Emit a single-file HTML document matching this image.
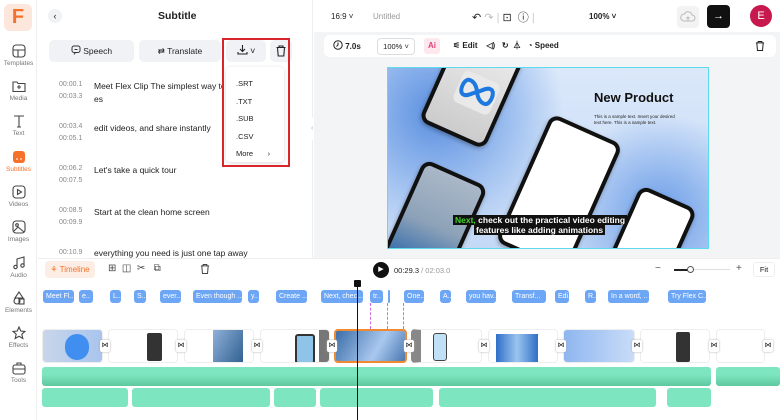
<!DOCTYPE html>
<html><head><meta charset="utf-8"><style>
*{box-sizing:border-box;margin:0;padding:0}
body{width:780px;height:420px;overflow:hidden;background:#fff;font-family:"Liberation Sans",sans-serif;color:#222;position:relative}
.a{position:absolute}
.side{left:0;top:0;width:37px;height:420px;border-right:1px solid #eee;background:#fff}
.si{position:absolute;left:0;width:37px;text-align:center;font-size:6.5px;color:#777}
.si svg{display:block;margin:0 auto 2px}
.sub{font-size:8.5px;color:#222}
.tm{font-size:7px;color:#888;line-height:12px}
.chip{position:absolute;top:290px;height:13px;background:#6ea6f6;border-radius:3px;color:#fff;font-size:7px;line-height:13px;padding-left:3px;overflow:hidden;white-space:nowrap}
.clip{position:absolute;top:329px;height:34px;border-radius:4px;background:#fff;border:1px solid #eee;overflow:hidden}
.tr{position:absolute;top:340px;width:10px;height:12px;background:#fff;border-radius:2px;font-size:7px;text-align:center;line-height:12px;color:#222;box-shadow:0 0 2px #aaa}
.au{position:absolute;height:19px;background:#7de6c0;border-radius:3px}
.ph{position:absolute;border:4px solid #111;border-radius:10px;background:#fff;box-shadow:0 2px 4px rgba(0,0,0,.3)}
</style></head><body>
<div class="a side">
 <div class="a" style="left:4px;top:4px;width:28px;height:27px;background:#fde7dc;border-radius:6px;color:#f5702a;font-weight:bold;font-size:20px;text-align:center;line-height:27px">F</div>
 <div class="si" style="top:44px"><svg width="14" height="14" viewBox="0 0 14 14" fill="none" stroke="#444" stroke-width="1.1"><rect x="1" y="1" width="12" height="12" rx="3"/><path d="M1 6h12M6 6v7"/></svg>Templates</div>
 <div class="si" style="top:79px"><svg width="14" height="14" viewBox="0 0 14 14" fill="none" stroke="#444" stroke-width="1.1"><path d="M1 3h4l1 1.5h7v8H1z"/><path d="M7 6v4M5 8h4"/></svg>Media</div>
 <div class="si" style="top:114px"><svg width="14" height="14" viewBox="0 0 14 14" fill="none" stroke="#444" stroke-width="1.1"><path d="M2 2h10M7 2v11M5 13h4"/></svg>Text</div>
 <div class="si" style="top:150px;color:#f5702a"><svg width="14" height="14" viewBox="0 0 14 14"><rect x="1" y="1" width="12" height="12" rx="3" fill="#f5702a"/><path d="M4 9h2M8 9h2" stroke="#fff"/></svg>Subtitles</div>
 <div class="si" style="top:185px"><svg width="14" height="14" viewBox="0 0 14 14" fill="none" stroke="#444" stroke-width="1.1"><rect x="1" y="1" width="12" height="12" rx="3"/><path d="M5.5 4.5v5l4-2.5z"/></svg>Videos</div>
 <div class="si" style="top:220px"><svg width="14" height="14" viewBox="0 0 14 14" fill="none" stroke="#444" stroke-width="1.1"><rect x="1" y="1" width="12" height="12" rx="3"/><circle cx="5" cy="5" r="1.3"/><path d="M2 11l4-4 6 5"/></svg>Images</div>
 <div class="si" style="top:256px"><svg width="14" height="14" viewBox="0 0 14 14" fill="none" stroke="#444" stroke-width="1.1"><path d="M5 11V3l7-2v8"/><circle cx="3.5" cy="11" r="1.7"/><circle cx="10.5" cy="9.5" r="1.7"/></svg>Audio</div>
 <div class="si" style="top:291px"><svg width="14" height="14" viewBox="0 0 14 14" fill="none" stroke="#444" stroke-width="1.1"><path d="M7 1l4 6H3z"/><circle cx="5" cy="10" r="3"/><rect x="7" y="8" width="5" height="5"/></svg>Elements</div>
 <div class="si" style="top:326px"><svg width="14" height="14" viewBox="0 0 14 14" fill="none" stroke="#444" stroke-width="1.1"><path d="M7 1l1.8 4 4.2.4-3.2 2.8 1 4.3L7 10.3 3.2 12.5l1-4.3L1 5.4l4.2-.4z"/></svg>Effects</div>
 <div class="si" style="top:361px"><svg width="14" height="14" viewBox="0 0 14 14" fill="none" stroke="#444" stroke-width="1.1"><rect x="1" y="4" width="12" height="9" rx="2"/><path d="M5 4V2h4v2M1 8h12"/></svg>Tools</div>
</div>

<!-- subtitle panel -->
<div class="a" style="left:38px;top:0;width:275px;height:258px;background:#fff;border-right:1px solid #eee"></div>
<div class="a" style="left:48px;top:9px;width:14px;height:14px;border-radius:7px;background:#f1f2f4;font-size:9px;text-align:center;line-height:14px">‹</div>
<div class="a" style="left:158px;top:10px;font-size:10.5px;font-weight:bold">Subtitle</div>
<div class="a" style="left:49px;top:40px;width:85px;height:22px;background:#f1f2f5;border-radius:5px;font-size:8.5px;line-height:22px;text-align:center"><svg width="10" height="10" viewBox="0 0 10 10" fill="none" stroke="#333" style="vertical-align:-1px"><rect x="1" y="1" width="8" height="6.5" rx="2"/><path d="M3 9.5l1.5-2M3.5 4.5h3"/></svg> Speech</div>
<div class="a" style="left:139px;top:40px;width:82px;height:22px;background:#f1f2f5;border-radius:5px;font-size:8.5px;line-height:22px;text-align:center">⇄ Translate</div>
<div class="a" style="left:226px;top:40px;width:40px;height:22px;background:#f1f2f5;border-radius:5px;font-size:9px;line-height:22px;text-align:center"><svg width="11" height="11" viewBox="0 0 11 11" fill="none" stroke="#222" stroke-width="1.1" style="vertical-align:-1px"><path d="M5.5 1v6M3 5l2.5 2.5L8 5M1 8v2h9V8"/></svg> ˅</div>
<div class="a" style="left:270px;top:40px;width:22px;height:22px;background:#f1f2f5;border-radius:5px"><svg width="22" height="22" viewBox="0 0 22 22" fill="none" stroke="#222" stroke-width="1.1"><path d="M6.5 7.5h9M9 7.5V6h4v1.5M7.5 7.5l.7 8.5h5.6l.7-8.5"/></svg></div>
<div class="a" style="left:226px;top:67px;width:58px;height:95px;background:#fff;border-radius:4px;box-shadow:0 1px 4px rgba(0,0,0,.15)"></div>
<div class="a sub" style="left:236px;top:75px;font-size:7.5px;line-height:17.5px">.SRT<br>.TXT<br>.SUB<br>.CSV<br>More &nbsp; &nbsp; &nbsp; ›</div>
<div class="a" style="left:222px;top:38px;width:68px;height:129px;border:2px solid #d8262a"></div>
<div class="a tm" style="left:59px;top:79px">00:00.1<br>00:03.3</div>
<div class="a sub" style="left:94px;top:80px;line-height:13px;white-space:nowrap;width:128px;overflow:hidden">Meet Flex Clip The simplest way tog<br>es</div>
<div class="a tm" style="left:59px;top:121px">00:03.4<br>00:05.1</div>
<div class="a sub" style="left:94px;top:123px">edit videos, and share instantly</div>
<div class="a tm" style="left:59px;top:163px">00:06.2<br>00:07.5</div>
<div class="a sub" style="left:94px;top:165px">Let's take a quick tour</div>
<div class="a tm" style="left:59px;top:205px">00:08.5<br>00:09.9</div>
<div class="a sub" style="left:94px;top:207px">Start at the clean home screen</div>
<div class="a tm" style="left:59px;top:247px">00:10.9</div>
<div class="a sub" style="left:94px;top:248px">everything you need is just one tap away</div>
<div class="a" style="left:311px;top:117px;width:8px;height:24px;background:#fff;border-radius:4px;font-size:7px;color:#aaa;line-height:24px">‹</div>

<!-- right area -->
<div class="a" style="left:314px;top:0;width:466px;height:258px;background:#f3f4f6"></div>
<div class="a" style="left:314px;top:0;width:466px;height:32px;background:#fff"></div>
<div class="a" style="left:331px;top:12px;font-size:8px">16:9 ˅</div>
<div class="a" style="left:373px;top:12px;font-size:8px;color:#999">Untitled</div>
<div class="a" style="left:472px;top:9px;font-size:11px">↶ <span style="color:#bbb">↷</span> <span style="color:#ccc">|</span> ⊡ &nbsp;ⓘ <span style="color:#ccc">|</span></div>
<div class="a" style="left:589px;top:12px;font-size:8px;font-weight:bold">100% ˅</div>
<div class="a" style="left:677px;top:6px;width:22px;height:22px;background:#f3f3f3;border-radius:4px"><svg width="22" height="22" viewBox="0 0 22 22" fill="none" stroke="#bbb"><path d="M7 15h8a3 3 0 000-6 4 4 0 00-7.5-1A3.5 3.5 0 007 15zM11 11v4M9.5 12.5L11 11l1.5 1.5"/></svg></div>
<div class="a" style="left:707px;top:5px;width:23px;height:23px;background:#111;border-radius:4px;color:#fff;font-size:11px;text-align:center;line-height:23px">→</div>
<div class="a" style="left:750px;top:5px;width:22px;height:22px;background:#c8194f;border-radius:11px;color:#fff;font-size:11px;text-align:center;line-height:22px">E</div>
<div class="a" style="left:324px;top:35px;width:452px;height:22px;background:#fff;border-radius:6px"></div>
<div class="a" style="left:333px;top:40px;font-size:8px;font-weight:bold;white-space:nowrap"><svg width="10" height="10" viewBox="0 0 10 10" fill="none" stroke="#222" style="vertical-align:-1px"><circle cx="5" cy="5" r="4.2"/><path d="M5 2.5V5L3.5 6.5"/></svg> 7.0s</div>
<div class="a" style="left:377px;top:38px;width:38px;height:17px;border:1px solid #ddd;border-radius:4px;font-size:7.5px;text-align:center;line-height:15px">100% ˅</div>
<div class="a" style="left:424px;top:38px;width:16px;height:16px;background:#fde8ee;border-radius:3px;color:#e0407a;font-size:8px;font-weight:bold;text-align:center;line-height:16px">Ai</div>
<div class="a" style="left:453px;top:40px;font-size:8px;font-weight:bold;white-space:nowrap">⚟ Edit &nbsp; &nbsp;◁) &nbsp; ↻ &nbsp;⏃ &nbsp; ◔ Speed</div>
<div class="a" style="left:750px;top:36px"><svg width="20" height="20" viewBox="0 0 22 22" fill="none" stroke="#222" stroke-width="1.1"><path d="M6.5 7.5h9M9 7.5V6h4v1.5M7.5 7.5l.7 8.5h5.6l.7-8.5"/></svg></div>
<div class="a" style="left:387px;top:67px;width:322px;height:182px;border:1.5px solid #5fdbee;overflow:hidden;background:radial-gradient(circle at 15% 25%,#5a8fe0 0,#9fc0f0 25%,transparent 42%),radial-gradient(circle at 85% 80%,#6d9ee8 0,transparent 32%),linear-gradient(#dbe8fa,#c4d9f6)">
 <div class="ph" style="left:50px;top:-40px;width:72px;height:112px;transform:rotate(24deg);background:linear-gradient(#eee,#ccc)"><div style="position:absolute;left:18px;top:42px;width:40px;height:34px;background:#e9e9e9;border-radius:6px"></div><svg style="position:absolute;left:20px;top:48px" width="36" height="20" viewBox="0 0 36 20" fill="none" stroke="#1d78e0" stroke-width="4"><path d="M18 10C14 3 10 2 7 2 3 2 2 7 2 10s1 8 5 8c4 0 7-5 11-8s7-8 11-8c4 0 5 5 5 8s-1 8-5 8c-3 0-7-1-11-8"/></svg></div>
 <div class="ph" style="left:132px;top:55px;width:78px;height:140px;transform:rotate(24deg)"></div>
 <div class="ph" style="left:10px;top:100px;width:70px;height:115px;transform:rotate(24deg);background:linear-gradient(#aab8c8,#8da2b8 50%,#1e5fa8)"></div>
 <div class="ph" style="left:230px;top:125px;width:62px;height:100px;transform:rotate(24deg)"></div>
 <div class="a" style="left:206px;top:22px;font-size:13px;font-weight:bold;color:#111">New Product</div>
 <div class="a" style="left:206px;top:46px;font-size:4.5px;line-height:6px;color:#222">This is a sample text. Insert your desired<br>text here. This is a sample text.</div>
 <div class="a" style="left:65px;top:147px;background:#111;color:#fff;font-size:8.5px;font-weight:bold;padding:0 2px;line-height:10px;white-space:nowrap"><span style="color:#44d22a">Next,</span> check out the practical video editing</div>
 <div class="a" style="left:86px;top:157px;background:#111;color:#fff;font-size:8.5px;font-weight:bold;padding:0 2px;line-height:10px;white-space:nowrap">features like adding animations</div>
</div>

<!-- timeline -->
<div class="a" style="left:38px;top:258px;width:742px;height:162px;background:#fff;border-top:1px solid #eee"></div>
<div class="a" style="left:45px;top:261px;width:50px;height:17px;background:#fdeee5;border-radius:4px;color:#f5702a;font-size:8px;line-height:17px;text-align:center">⚘ Timeline</div>
<div class="a" style="left:108px;top:263px;font-size:10px;color:#444;white-space:nowrap">⊞ &nbsp;◫ &nbsp;✂ &nbsp; ⧉</div>
<div class="a" style="left:195px;top:259px"><svg width="20" height="20" viewBox="0 0 22 22" fill="none" stroke="#444" stroke-width="1.1"><path d="M6.5 7.5h9M9 7.5V6h4v1.5M7.5 7.5l.7 8.5h5.6l.7-8.5"/></svg></div>
<div class="a" style="left:373px;top:262px;width:16px;height:16px;border-radius:8px;background:#111;color:#fff;font-size:7px;text-align:center;line-height:16px">▶</div>
<div class="a" style="left:394px;top:266px;font-size:7.5px;white-space:nowrap">00:29.3 <span style="color:#999">/ 02:03.0</span></div>
<div class="a" style="left:655px;top:263px;font-size:10px;color:#555">−</div>
<div class="a" style="left:674px;top:269px;width:16px;height:1.5px;background:#222"></div>
<div class="a" style="left:690px;top:269px;width:40px;height:1px;background:#ddd"></div>
<div class="a" style="left:687px;top:266px;width:7px;height:7px;border-radius:4px;border:1px solid #555;background:#fff"></div>
<div class="a" style="left:736px;top:263px;font-size:10px;color:#555">+</div>
<div class="a" style="left:753px;top:262px;width:22px;height:15px;border:1px solid #eee;border-radius:3px;font-size:7.5px;text-align:center;line-height:14px">Fit</div>

<div class="chip" style="left:43px;width:31px">Meet Fl..</div>
<div class="chip" style="left:79px;width:14px">e..</div>
<div class="chip" style="left:110px;width:11px">L..</div>
<div class="chip" style="left:134px;width:12px">S..</div>
<div class="chip" style="left:160px;width:21px">ever...</div>
<div class="chip" style="left:193px;width:49px">Even though ...</div>
<div class="chip" style="left:248px;width:11px">y..</div>
<div class="chip" style="left:276px;width:31px">Create ...</div>
<div class="chip" style="left:321px;width:42px">Next, chec...</div>
<div class="chip" style="left:370px;width:13px">tr..</div>
<div class="chip" style="left:388px;width:2px;padding:0"></div>
<div class="chip" style="left:404px;width:20px">One...</div>
<div class="chip" style="left:440px;width:11px">A..</div>
<div class="chip" style="left:466px;width:30px">you hav...</div>
<div class="chip" style="left:512px;width:34px">Transf...</div>
<div class="chip" style="left:555px;width:14px">Edi..</div>
<div class="chip" style="left:585px;width:11px">R..</div>
<div class="chip" style="left:608px;width:41px">In a word, ..</div>
<div class="chip" style="left:668px;width:38px">Try Flex C..</div>
<div class="a" style="left:370px;top:303px;height:26px;border-left:1px dashed #d070e0"></div>
<div class="a" style="left:387px;top:303px;height:26px;border-left:1px dashed #d070e0"></div>
<div class="a" style="left:403px;top:303px;height:26px;border-left:1px dashed #d070e0"></div>

<div class="clip" style="left:42px;width:61px;background:linear-gradient(90deg,#c8d6ea,#a9c4ee)"><div style="position:absolute;left:22px;top:4px;width:24px;height:26px;border-radius:12px;background:#3f8ef0"></div></div>
<div class="clip" style="left:108px;width:70px"><div style="position:absolute;left:38px;top:3px;width:15px;height:28px;background:#333;border-radius:2px"></div></div>
<div class="clip" style="left:184px;width:70px"><div style="position:absolute;left:28px;top:0;width:30px;height:34px;background:linear-gradient(120deg,#8fb0d8,#2f5f90)"></div></div>
<div class="clip" style="left:260px;width:70px"><div style="position:absolute;left:34px;top:4px;width:20px;height:30px;background:#8ec4e8;border:2px solid #333;border-radius:3px"></div><div style="position:absolute;right:0;top:0;width:10px;height:34px;background:#777"></div></div>
<div class="clip" style="left:334px;width:73px;border:2px solid #f08a30;background:linear-gradient(120deg,#3c6ea8,#a9c8ef 60%,#4a78b0)"></div>
<div class="clip" style="left:411px;width:71px;border-left:10px solid #888"><div style="position:absolute;left:12px;top:3px;width:14px;height:28px;background:#bfe0f5;border:1.5px solid #444;border-radius:3px"></div></div>
<div class="clip" style="left:488px;width:70px"><div style="position:absolute;left:7px;top:4px;width:42px;height:28px;background:linear-gradient(90deg,#2f6fc8,#9bc4ef,#2f6fc8)"></div></div>
<div class="clip" style="left:563px;width:72px;background:linear-gradient(90deg,#8fb6f0,#c9dcf8)"></div>
<div class="clip" style="left:640px;width:70px"><div style="position:absolute;left:35px;top:2px;width:14px;height:30px;background:#333;border-radius:2px"></div></div>
<div class="clip" style="left:716px;width:49px"></div>
<div class="tr" style="left:100px">⋈</div><div class="tr" style="left:176px">⋈</div><div class="tr" style="left:252px">⋈</div><div class="tr" style="left:327px">⋈</div><div class="tr" style="left:404px">⋈</div><div class="tr" style="left:479px">⋈</div><div class="tr" style="left:556px">⋈</div><div class="tr" style="left:632px">⋈</div><div class="tr" style="left:709px">⋈</div><div class="tr" style="left:763px">⋈</div>

<div class="au" style="left:42px;top:367px;width:669px;background:linear-gradient(#7de6c0 40%,#5fc89e)"></div>
<div class="au" style="left:716px;top:367px;width:64px;background:linear-gradient(#7de6c0 40%,#5fc89e)"></div>
<div class="au" style="left:42px;top:388px;width:86px"></div>
<div class="au" style="left:132px;top:388px;width:138px"></div>
<div class="au" style="left:274px;top:388px;width:42px"></div>
<div class="au" style="left:320px;top:388px;width:113px"></div>
<div class="au" style="left:439px;top:388px;width:217px"></div>
<div class="au" style="left:667px;top:388px;width:44px"></div>

<div class="a" style="left:357px;top:283px;width:1px;height:137px;background:#111"></div>
<div class="a" style="left:354px;top:280px;width:7px;height:7px;background:#111;border-radius:1px"></div>
</body></html>
